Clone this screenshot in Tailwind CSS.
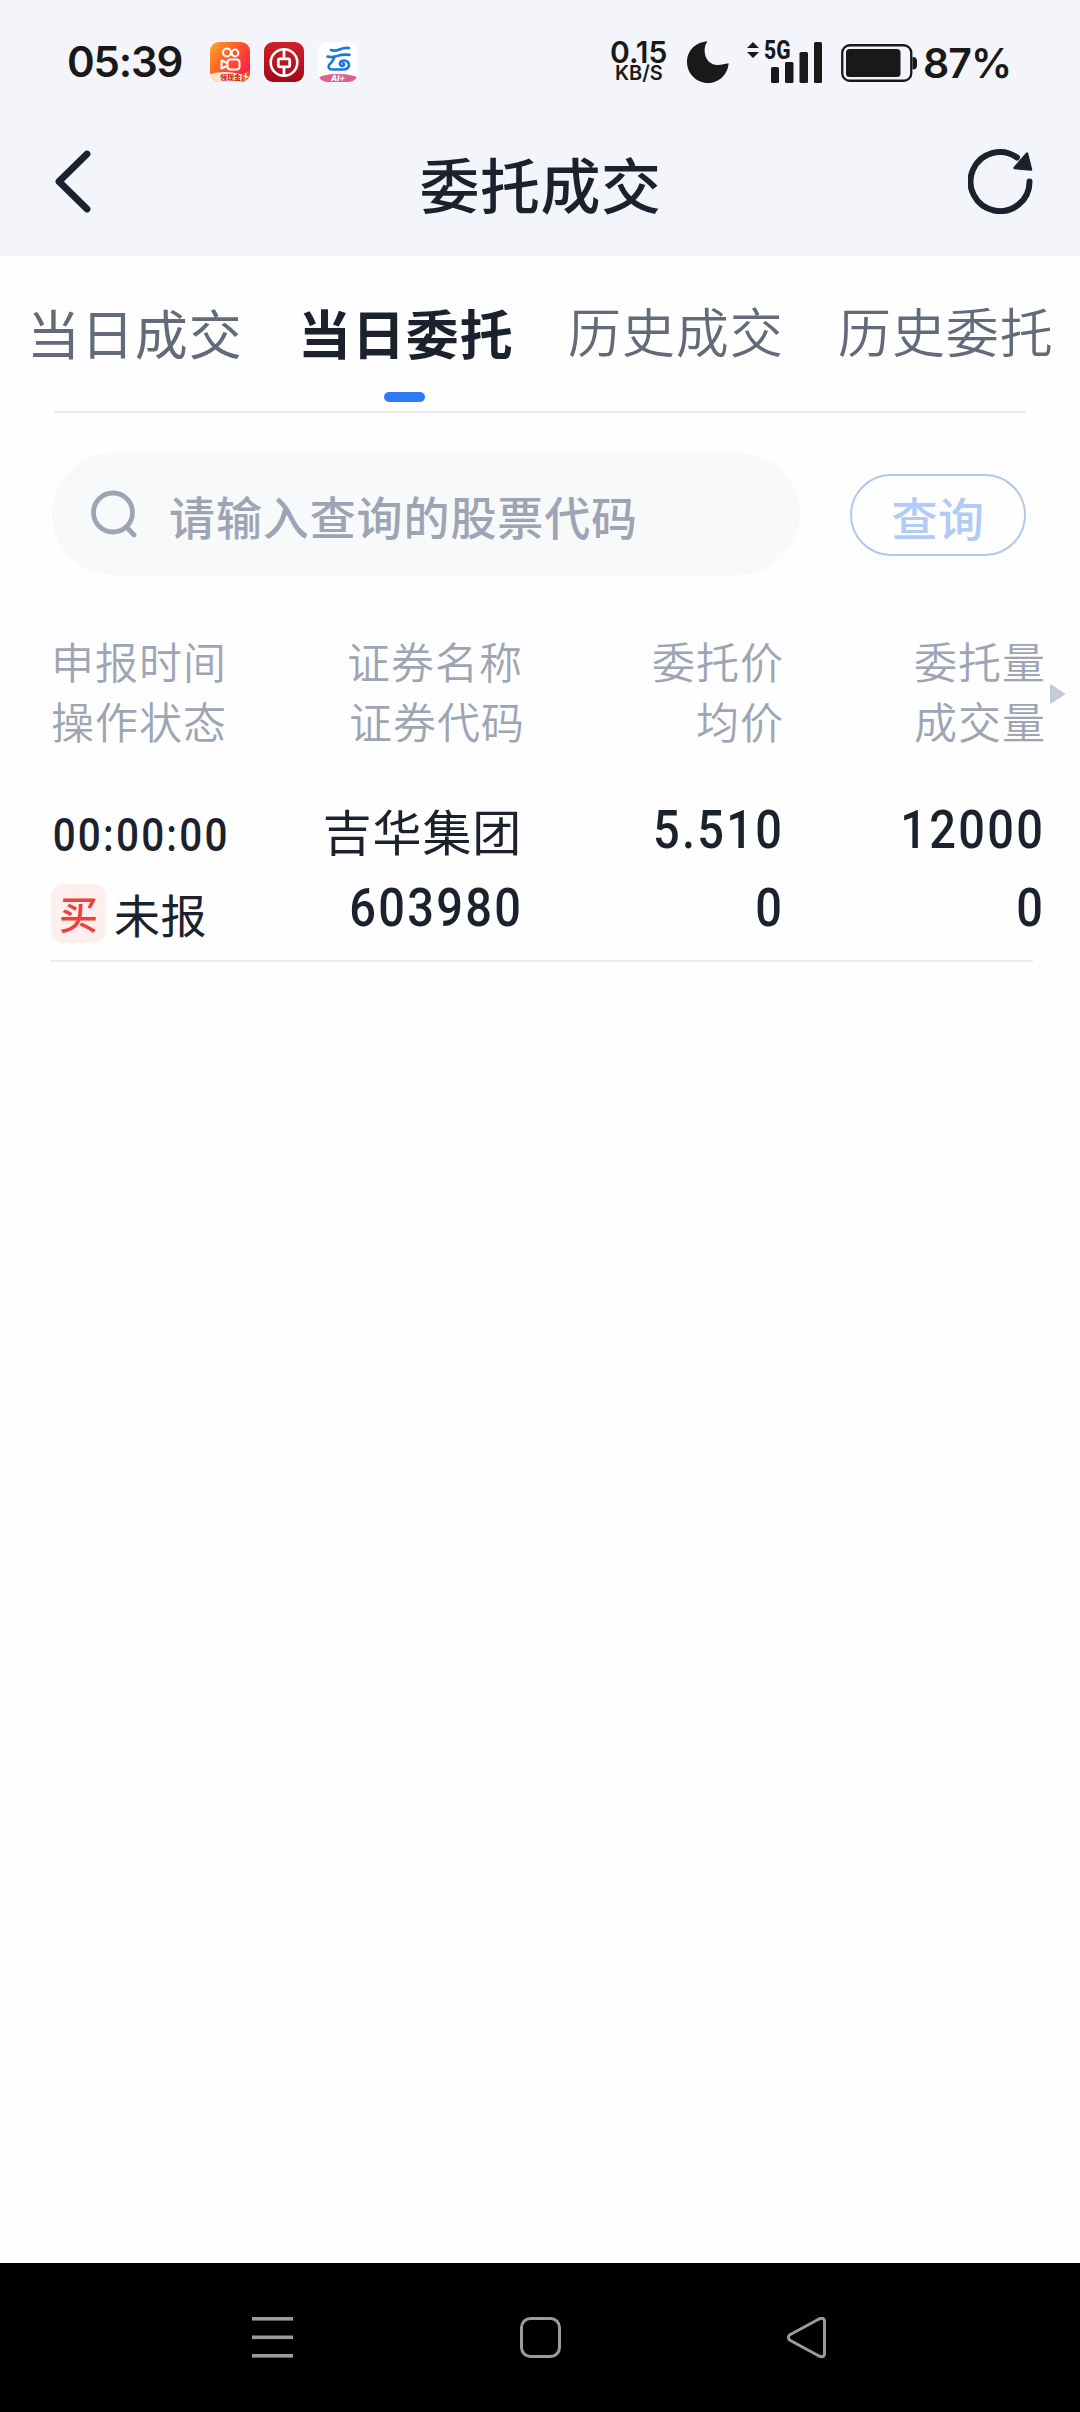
<!DOCTYPE html>
<html lang="zh-CN">
<head>
<meta charset="utf-8">
<title>委托成交</title>
<script src="https://cdn.jsdelivr.net/npm/@tailwindcss/browser@4"></script>
</head>
<body class="bg-white">
<div class="flex h-[2412px] w-[1080px] flex-col overflow-hidden bg-[#fefefe] font-['Noto_Sans_CJK_SC',sans-serif] whitespace-nowrap text-[#1b212d]">

  <!-- Status bar + title bar -->
  <header class="h-[256px] shrink-0 bg-[#f4f5fa]">
    <div class="flex h-[124px] items-center pl-[67px] font-['Inter',sans-serif] text-[#191919]">
      <div class="w-[143px] text-[42px] leading-none font-semibold tracking-[-1.2px]">05:39</div>
      <div class="flex w-[400px] gap-[14px]">
        <svg class="size-10" viewBox="0 0 40 40">
          <defs>
            <linearGradient id="ks" x1="0" y1="0" x2="1" y2=".7"><stop offset="0" stop-color="#ffa726"/><stop offset=".5" stop-color="#ff5a2b"/><stop offset="1" stop-color="#f91f45"/></linearGradient>
            <clipPath id="r"><rect width="40" height="40" rx="9"/></clipPath>
          </defs>
          <g clip-path="url(#r)">
            <rect width="40" height="40" fill="url(#ks)"/>
            <path d="M0 32Q14 28 30 32L40 34V40H0Z" fill="#ffe9c4"/>
            <path d="M32 32l8-4v9l-9 4z" fill="#f0532d"/>
            <path d="M37 30l-4 5h2.500l-1.500 4 4.500-5h-2.500z" fill="#fff3b0"/>
          </g>
          <g fill="none" stroke="#fff" stroke-width="2">
            <circle cx="17" cy="10.500" r="4"/><circle cx="25" cy="11" r="3.400"/>
            <rect x="17.500" y="17.500" width="12" height="10" rx="3"/>
            <path d="M17 21l-5.500-2.500v8L17 24" stroke-linejoin="round"/>
          </g>
          <text x="10" y="38.300" font-size="7" font-weight="900" fill="#c9301c" font-family="Noto Sans CJK SC, sans-serif">领现金</text>
        </svg>
        <svg class="size-10" viewBox="0 0 40 40">
          <defs><linearGradient id="boc" x1="0" y1="0" x2="0" y2="1"><stop offset="0" stop-color="#d0202c"/><stop offset="1" stop-color="#a00a17"/></linearGradient></defs>
          <rect width="40" height="40" rx="9" fill="url(#boc)"/>
          <g fill="none" stroke="#fff"><circle cx="20" cy="20.500" r="13.300" stroke-width="2.600"/><rect x="14.300" y="16.800" width="11.400" height="8" rx="1.500" stroke-width="2.800"/><path d="M20 7v9M20 25.500V34" stroke-width="2.800"/></g>
        </svg>
        <svg class="size-10" viewBox="0 0 40 40">
          <defs><clipPath id="r2"><rect width="40" height="40" rx="9"/></clipPath></defs>
          <rect width="40" height="40" rx="9" fill="#fff"/>
          <ellipse cx="20" cy="37" rx="20" ry="5" fill="#dc6391" clip-path="url(#r2)"/>
          <g fill="none" stroke="#1a78dc" stroke-linecap="round" stroke-linejoin="round">
            <path d="M13 8q4 1.500 8.500-.5T31 6" stroke-width="2.600"/>
            <path d="M9.500 14.500q5 1.200 10-.6t12-1" stroke-width="2.600"/>
            <path d="M16.500 15q-2 5-5 7.500c-2 2.500-1 5 3 5h11c7.500 0 7-9.500 0-9-4.500.5-4.500 5.500-1.200 5.500 2 0 2.500-2 1-2.500" stroke-width="2.700"/>
          </g>
          <text x="20" y="39.400" text-anchor="middle" font-size="8" font-weight="800" font-style="italic" fill="#fff" font-family="Inter, sans-serif">AI+</text>
        </svg>
      </div>
      <div class="flex w-[77px] flex-col pb-[1px]">
        <span class="text-[30px] leading-[24px] font-semibold">0.15</span>
        <span class="pl-[5px] text-[20px] leading-[19px] font-semibold">KB/S</span>
      </div>
      <svg class="mr-[18px] h-[42px] w-[42px]" viewBox="0 0 42 42"><path d="M20.500.6C14.500 8 18 24.500 31 24c4 0 7-1.200 10.600-1.800C41 33.500 31.500 42 21 42 9.500 42 0 32.600 0 21S9.500.6 20.500.6Z" fill="#191919"/></svg>
      <svg class="mr-[19px] h-[42px] w-[75px] overflow-visible" viewBox="0 0 75 42" fill="#191919">
        <path d="M0 7l6-6 6 6zM0 11l6 6 6-6z"/>
        <text x="17" y="18" font-size="25" font-weight="800" textLength="26.500" lengthAdjust="spacingAndGlyphs" font-family="Roboto, sans-serif">5G</text>
        <rect x="24" y="26" width="8" height="16" rx="1.500"/><rect x="38" y="21" width="8.500" height="21" rx="1.500"/><rect x="52.500" y="11" width="8.500" height="31" rx="1.500"/><rect x="67" y="1" width="8" height="41" rx="1.500"/>
      </svg>
      <svg class="mt-[2px] mr-[6px] h-[38px] w-[76px]" viewBox="0 0 76 38" fill="#191919">
        <rect x="1.250" y="1.250" width="69" height="35.500" rx="7.500" fill="none" stroke="#191919" stroke-width="2.300"/>
        <rect x="5" y="5" width="54.500" height="28" rx="3.500"/>
        <path d="M71.500 13q4.500 0 4.500 4v4.500q0 4-4.500 4z"/>
      </svg>
      <div class="pt-[2px] text-[41px] leading-none font-semibold tracking-[-0.9px]">87%</div>
    </div>
    <div class="flex h-[114px] items-center justify-between pr-[46px] pl-[55px]">
      <svg class="h-[63px] w-[36px]" viewBox="0 0 36 63" fill="none" stroke="#1b212d" stroke-width="6.800" stroke-linecap="round" stroke-linejoin="round"><path d="M32 4L4 31.500 32 59"/></svg>
      <h1 class="mt-[3px] pl-[22px] text-[60px] leading-[80px] font-medium tracking-[0.5px]">委托成交</h1>
      <svg class="h-[66px] w-[66px]" viewBox="0 0 66 66"><path d="M61.500 33.500A29.500 29.500 0 1 1 49 9.500" fill="none" stroke="#1b212d" stroke-width="6" stroke-linecap="round"/><path d="M59 5.500L63 21.500 46.500 20Z" fill="#1b212d" stroke="#1b212d" stroke-width="2.500" stroke-linejoin="round"/></svg>
    </div>
  </header>

  <!-- Tabs -->
  <nav class="flex h-[155px] shrink-0 pt-[36px] pl-[27px] text-[53px] leading-[80px] tracking-[0.9px] text-[#636a79]">
    <div class="w-[271px]">当日成交</div>
    <div class="flex w-[270px] flex-col text-[#1b212d]">
      <span class="font-bold">当日委托</span>
      <span class="mt-[20px] ml-[86px] h-[10px] w-[41px] rounded-[5px] bg-[#2f7bf6]"></span>
    </div>
    <div class="-mt-[2px] w-[270px] font-[350]">历史成交</div>
    <div class="-mt-[2px] font-[350]">历史委托</div>
  </nav>
  <div class="mx-[54px] h-[2px] shrink-0 bg-[#ececee]"></div>

  <!-- Search -->
  <div class="mt-[40px] flex h-[122px] shrink-0 items-center pr-[54px] pl-[52px]">
    <div class="flex h-[122px] w-[748px] items-center rounded-[61px] bg-[#f8f9fb] pl-[39px]">
      <svg class="h-[48px] w-[47px]" viewBox="0 0 47 48" fill="none" stroke="#9da5b5" stroke-width="4.800" stroke-linecap="round"><circle cx="22" cy="22.500" r="19.500"/><path d="M36.500 38L43 45"/></svg>
      <span class="pt-[2px] pl-[31px] text-[46px] leading-[60px] font-medium tracking-[0.9px] text-[#9da5b5]">请输入查询的股票代码</span>
    </div>
    <button class="mt-px ml-[50px] flex h-[82px] w-[176px] items-center justify-center rounded-full border-2 border-[#afc8ec] pt-[2px] text-[46px] leading-[60px] font-medium tracking-[0.6px] text-[#b1cbf7]">查询</button>
  </div>

  <!-- Column headings -->
  <div class="mt-[55px] flex h-[120px] shrink-0 items-center pl-[51px] text-[43px] leading-[60px] font-[350] tracking-[1px] text-[#9da5b5]">
    <div class="w-[176px]">申报时间<br>操作状态</div>
    <div class="w-[298px] text-right"><div class="pr-[2px]">证券名称</div><div>证券代码</div></div>
    <div class="w-[259px] text-right">委托价<br>均价</div>
    <div class="w-[262px] text-right">委托量<br>成交量</div>
    <svg class="mt-[8px] ml-[4px] h-[20px] w-[15px]" viewBox="0 0 15 20"><path d="M1 1.500v17L14 10z" fill="#c5cad8" stroke="#c5cad8" stroke-width="2" stroke-linejoin="round"/></svg>
  </div>

  <!-- Order row -->
  <div class="mt-[41px] ml-[50px] flex h-[171px] w-[983px] shrink-0 border-b-2 border-[#ececee] font-['Roboto','Noto_Sans_CJK_SC',sans-serif] text-[54px] leading-[78px] font-medium tracking-[2.6px]">
    <div class="w-[177px] shrink-0 pt-[5px]">
      <div class="origin-left scale-x-[0.88] pl-[3px] text-[46px] tracking-[2.5px]">00:00:00</div>
      <div class="flex h-[78px] items-center pl-[1px] font-['Noto_Sans_CJK_SC',sans-serif]">
        <span class="h-[59px] w-[55px] rounded-[13px] bg-[#feefef] pl-[8px] text-[39px] leading-[57px] tracking-normal text-[#ea423c]">买</span>
        <span class="pl-[8px] text-[46px] font-normal tracking-[0.5px]">未报</span>
      </div>
    </div>
    <div class="w-[297px] shrink-0 text-right">
      <div class="pr-[2px] font-['Noto_Sans_CJK_SC',sans-serif] text-[49px] font-normal tracking-[0.8px]">吉华集团</div>
      <div class="origin-right scale-x-[0.87] pr-[1px]">603980</div>
    </div>
    <div class="w-[261px] shrink-0 origin-right scale-x-[0.87] pr-[1px] text-right"><div>5.510</div><div>0</div></div>
    <div class="w-[261px] shrink-0 origin-right scale-x-[0.87] pr-[1px] text-right"><div>12000</div><div>0</div></div>
  </div>

  <!-- System navigation -->
  <footer class="mt-auto flex h-[149px] shrink-0 items-start bg-black pt-[54px] pl-[252px]">
    <svg class="size-[42px]" viewBox="0 0 42 42" fill="#9b9b9b"><rect y="0" width="41" height="3.600"/><rect y="18.500" width="41" height="3.600"/><rect y="37" width="41" height="3.600"/></svg>
    <svg class="ml-[226px] size-[42px]" viewBox="0 0 42 42" fill="none" stroke="#9b9b9b" stroke-width="3"><rect x="1.500" y="1.500" width="38" height="38" rx="9"/></svg>
    <svg class="ml-[224px] size-[42px]" viewBox="0 0 42 42" fill="none" stroke="#9b9b9b" stroke-width="3" stroke-linejoin="round"><path d="M3.500 18Q1.500 20.500 3.500 23L33 39Q38 41 38.500 37V4Q38 0 33 2Z"/></svg>
  </footer>
</div>
</body>
</html>
